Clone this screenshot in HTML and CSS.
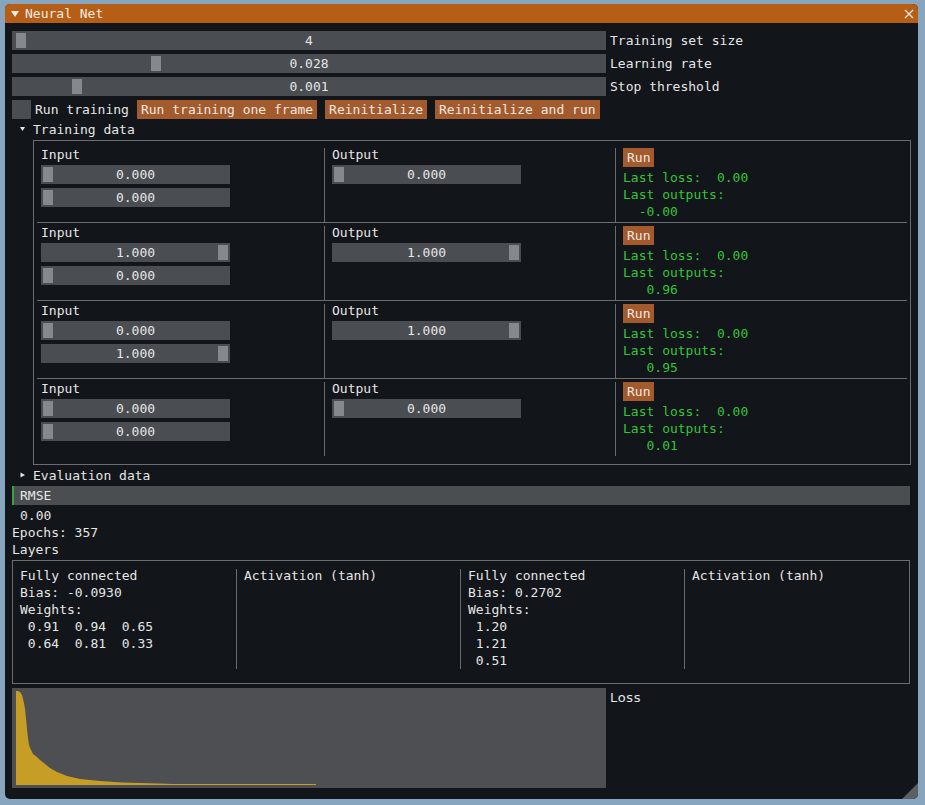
FILE: index.html
```html
<!DOCTYPE html>
<html>
<head>
<meta charset="utf-8">
<link rel="stylesheet" href="styles.css">
</head>
<body>
<div class="window">
  <div class="titlebar">
    <svg class="title-arrow" width="8" height="6" viewBox="0 0 8 6"><polygon points="0,0 8,0 4,6" fill="#f2ece6"/></svg>
    <span>Neural Net</span>
    <svg class="close" width="10" height="10" viewBox="0 0 10 10"><path d="M1 1 L9 9 M9 1 L1 9" stroke="#f2ece6" stroke-width="1.2"/></svg>
  </div>
  <div class="content">
    <div class="row">
      <div class="slider slider-wide"><span class="grab" style="left:4px"></span><span class="val">4</span></div>
      <span class="label">Training set size</span>
    </div>
    <div class="row">
      <div class="slider slider-wide"><span class="grab" style="left:139px"></span><span class="val">0.028</span></div>
      <span class="label">Learning rate</span>
    </div>
    <div class="row">
      <div class="slider slider-wide"><span class="grab" style="left:60px"></span><span class="val">0.001</span></div>
      <span class="label">Stop threshold</span>
    </div>
    <div class="row">
      <span class="checkbox"></span>
      <span class="cb-label">Run training</span>
      <span class="btn">Run training one frame</span>
      <span class="btn">Reinitialize</span>
      <span class="btn">Reinitialize and run</span>
    </div>
    <div class="tree">
      <svg class="tree-arrow" width="21" height="13" viewBox="0 0 21 13"><polygon points="8,4 13,4 10.5,8" fill="#e6e6e6"/></svg>
      <span>Training data</span>
    </div>
    <div class="table">
      <div class="trow">
        <div class="cell">
          <div class="txt">Input</div>
          <div class="slider slider-small"><span class="grab" style="left:2px"></span><span class="val">0.000</span></div>
          <div class="slider slider-small"><span class="grab" style="left:2px"></span><span class="val">0.000</span></div>
        </div>
        <div class="cell sep">
          <div class="txt">Output</div>
          <div class="slider slider-small"><span class="grab" style="left:2px"></span><span class="val">0.000</span></div>
        </div>
        <div class="cell sep">
          <div class="rowline"><span class="btn">Run</span></div>
          <div class="txt green">Last loss:  0.00</div>
          <div class="txt green">Last outputs:</div>
          <div class="txt green">  -0.00</div>
        </div>
      </div>
      <div class="trow">
        <div class="cell">
          <div class="txt">Input</div>
          <div class="slider slider-small"><span class="grab" style="left:177px"></span><span class="val">1.000</span></div>
          <div class="slider slider-small"><span class="grab" style="left:2px"></span><span class="val">0.000</span></div>
        </div>
        <div class="cell sep">
          <div class="txt">Output</div>
          <div class="slider slider-small"><span class="grab" style="left:177px"></span><span class="val">1.000</span></div>
        </div>
        <div class="cell sep">
          <div class="rowline"><span class="btn">Run</span></div>
          <div class="txt green">Last loss:  0.00</div>
          <div class="txt green">Last outputs:</div>
          <div class="txt green">   0.96</div>
        </div>
      </div>
      <div class="trow">
        <div class="cell">
          <div class="txt">Input</div>
          <div class="slider slider-small"><span class="grab" style="left:2px"></span><span class="val">0.000</span></div>
          <div class="slider slider-small"><span class="grab" style="left:177px"></span><span class="val">1.000</span></div>
        </div>
        <div class="cell sep">
          <div class="txt">Output</div>
          <div class="slider slider-small"><span class="grab" style="left:177px"></span><span class="val">1.000</span></div>
        </div>
        <div class="cell sep">
          <div class="rowline"><span class="btn">Run</span></div>
          <div class="txt green">Last loss:  0.00</div>
          <div class="txt green">Last outputs:</div>
          <div class="txt green">   0.95</div>
        </div>
      </div>
      <div class="trow">
        <div class="cell">
          <div class="txt">Input</div>
          <div class="slider slider-small"><span class="grab" style="left:2px"></span><span class="val">0.000</span></div>
          <div class="slider slider-small"><span class="grab" style="left:2px"></span><span class="val">0.000</span></div>
        </div>
        <div class="cell sep">
          <div class="txt">Output</div>
          <div class="slider slider-small"><span class="grab" style="left:2px"></span><span class="val">0.000</span></div>
        </div>
        <div class="cell sep">
          <div class="rowline"><span class="btn">Run</span></div>
          <div class="txt green">Last loss:  0.00</div>
          <div class="txt green">Last outputs:</div>
          <div class="txt green">   0.01</div>
        </div>
      </div>
    </div>
    <div class="tree">
      <svg class="tree-arrow" width="21" height="13" viewBox="0 0 21 13"><polygon points="8.5,3.5 13,6 8.5,8.5" fill="#e6e6e6"/></svg>
      <span>Evaluation data</span>
    </div>
    <div class="header">RMSE</div>
    <div class="txt indent">0.00</div>
    <div class="txt">Epochs: 357</div>
    <div class="txt">Layers</div>
    <div class="layers">
      <div class="lcell">
        <div class="txt">Fully connected</div>
        <div class="txt">Bias: -0.0930</div>
        <div class="txt">Weights:</div>
        <div class="txt"> 0.91  0.94  0.65</div>
        <div class="txt"> 0.64  0.81  0.33</div>
      </div>
      <div class="lcell sep">
        <div class="txt">Activation (tanh)</div>
      </div>
      <div class="lcell sep">
        <div class="txt">Fully connected</div>
        <div class="txt">Bias: 0.2702</div>
        <div class="txt">Weights:</div>
        <div class="txt"> 1.20</div>
        <div class="txt"> 1.21</div>
        <div class="txt"> 0.51</div>
      </div>
      <div class="lcell sep">
        <div class="txt">Activation (tanh)</div>
      </div>
    </div>
    <div class="plotrow">
      <svg class="plot" width="594" height="100" viewBox="0 0 594 100">
        <rect x="0" y="0" width="594" height="100" fill="#4e4f52"/>
        <polygon fill="#c69e25" points="4,97 4,3 6,3 8,4 10,7 11,11 12,15 13,21 14,30 15,41 16,50 17,57 19,62 21,66 25,69 28,72 33,76 38,80 45,84 55,88 68,91 88,93 110,94.5 147,95.5 160,96 304,96 304,97"/>
      </svg>
      <span class="plot-label">Loss</span>
    </div>
  </div>
  <svg class="grip" width="16" height="16" viewBox="0 0 16 16"><polygon points="16,0 16,16 0,16" fill="#5c5f63"/></svg>
</div>
</body>
</html>
```
FILE: styles.css
```css
body {
  margin: 0;
  background: #88a5bf;
  font-family: "DejaVu Sans Mono", monospace;
  font-size: 13px;
  line-height: 13px;
  color: #e6e6e6;
}

.window {
  position: relative;
  margin: 4px 0 0 5px;
  width: 913px;
  height: 795px;
  background: #121519;
  border-radius: 5px;
  overflow: hidden;
}

.titlebar {
  height: 19px;
  background: #b65e16;
  display: flex;
  align-items: center;
  padding: 0 4px 0 6px;
  color: #f2ece6;
}

.title-arrow {
  margin-right: 6px;
  flex: none;
}

.close {
  margin-left: auto;
  flex: none;
}

.content {
  padding: 8px 7px 0 7px;
  display: flex;
  flex-direction: column;
  gap: 4px;
}

.row {
  display: flex;
  align-items: center;
  height: 19px;
}

.slider {
  position: relative;
  height: 19px;
  background: #4a4e52;
  display: flex;
  align-items: center;
  justify-content: center;
  flex: none;
}

.slider-wide {
  width: 594px;
}

.slider-small {
  width: 189px;
}

.grab {
  position: absolute;
  top: 2px;
  width: 10px;
  height: 15px;
  background: #85888c;
}

.val {
  position: relative;
}

.label {
  margin-left: 4px;
}

.checkbox {
  width: 19px;
  height: 19px;
  background: #4a4e52;
  flex: none;
}

.cb-label {
  margin: 0 8px 0 4px;
}

.btn {
  height: 19px;
  padding: 0 4px;
  background: #a35b2d;
  color: #f0e8e0;
  display: flex;
  align-items: center;
  margin-right: 8px;
  flex: none;
}

.rowline {
  display: flex;
  height: 19px;
}

.tree {
  display: flex;
  align-items: center;
  height: 13px;
}

.tree-arrow {
  flex: none;
}

.table {
  margin-left: 21px;
  border: 1px solid #6a6d70;
  padding: 4px 0 8px;
}

.trow {
  display: grid;
  grid-template-columns: 287px 291px 1fr;
  margin: 0 3px;
  padding-top: 3px;
  border-bottom: 1px solid #6a6d70;
}

.trow:last-child {
  border-bottom: none;
}

.cell {
  display: flex;
  flex-direction: column;
  gap: 4px;
  padding: 0 0 4px 4px;
}

.cell.sep {
  border-left: 1px solid #6a6d70;
  padding-left: 7px;
}

.txt {
  height: 13px;
  line-height: 13px;
  white-space: pre;
}

.green {
  color: #34c43c;
}

.header {
  height: 19px;
  background: #4b4e51;
  border-left: 2px solid #3f9f42;
  padding-left: 6px;
  margin-right: 1px;
  display: flex;
  align-items: center;
}

.indent {
  padding-left: 8px;
}

.layers {
  border: 1px solid #6a6d70;
  padding: 8px 0 14px;
  margin-right: 1px;
  display: grid;
  grid-template-columns: 223px 224px 224px 1fr;
}

.lcell {
  display: flex;
  flex-direction: column;
  gap: 4px;
  padding: 0 0 2px 7px;
}

.lcell.sep {
  border-left: 1px solid #6a6d70;
}

.plotrow {
  display: flex;
  align-items: flex-start;
}

.plot {
  display: block;
  flex: none;
}

.plot-label {
  margin-left: 4px;
  padding-top: 3px;
  font-family: "DejaVu Sans", sans-serif;
  letter-spacing: 0.7px;
}

.grip {
  position: absolute;
  right: 0;
  bottom: 0;
}
```
